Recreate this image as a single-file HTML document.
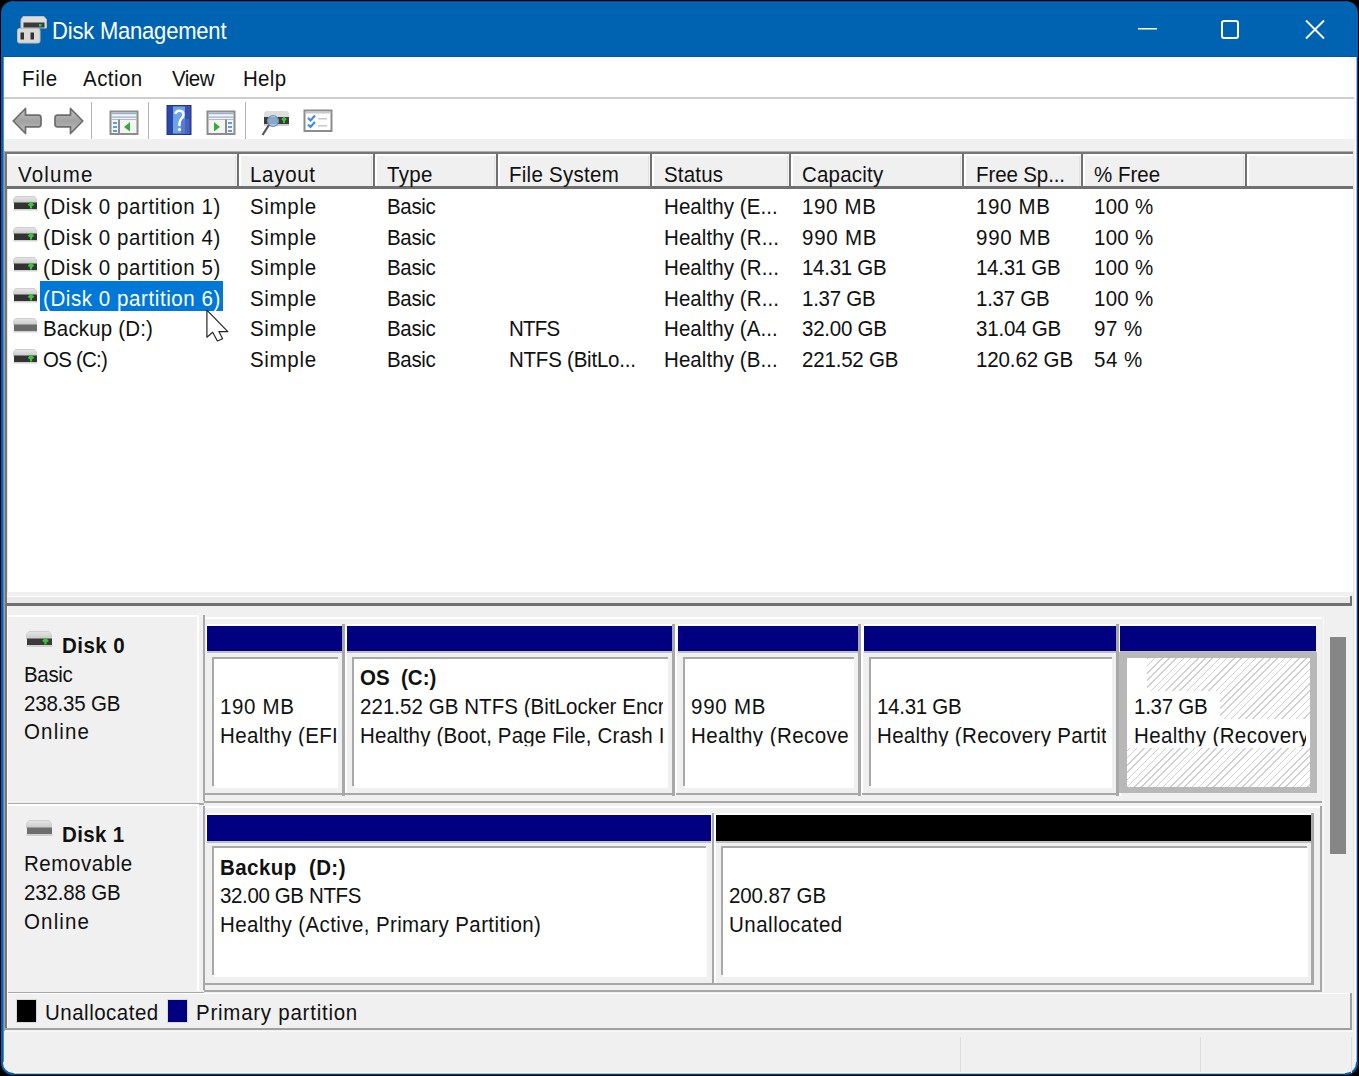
<!DOCTYPE html>
<html><head><meta charset="utf-8">
<style>
*{margin:0;padding:0;box-sizing:border-box}
html,body{width:1359px;height:1076px;overflow:hidden;background:#000}
body{position:relative;font-family:"Liberation Sans",sans-serif;font-size:20.5px;color:#000}
.a{position:absolute}
.t{position:absolute;white-space:pre;line-height:20px;height:20px;color:#111;transform:scaleY(1.08);transform-origin:0 17px}
</style></head><body>
<div class="a" style="left:1px;top:1px;width:1357px;height:1074px;border-radius:12px;background:#0063b1"></div>
<div class="a" style="left:3px;top:57px;width:1353px;height:1016px;background:#f0f0f0;border-radius:0 0 10px 10px"></div>

<div class="t" style="left:52px;top:21px;letter-spacing:-0.2px;color:#fff;font-size:22px;line-height:21px">Disk Management</div>
<div class="a" style="left:4px;top:57px;width:1351px;height:40px;background:#fff;"></div>
<div class="a" style="left:4px;top:97px;width:1351px;height:2px;background:#cdcdcd;"></div>
<div class="t" style="left:22px;top:69px;letter-spacing:0.67px;">File</div>
<div class="t" style="left:83px;top:69px;letter-spacing:0.46px;">Action</div>
<div class="t" style="left:172px;top:69px;letter-spacing:-0.53px;">View</div>
<div class="t" style="left:243px;top:69px;letter-spacing:0.3px;">Help</div>
<div class="a" style="left:4px;top:99px;width:1351px;height:40px;background:#fff;"></div>
<svg width="0" height="0" style="position:absolute">
<defs>
 <linearGradient id="gtop" x1="0" y1="0" x2="0" y2="1"><stop offset="0" stop-color="#e6e6e6"/><stop offset="1" stop-color="#c9c9c9"/></linearGradient>
 <g id="ico">
  <path d="M2.5 1.5 H21.5 L23.5 4 V8 H0.5 V4 Z" fill="url(#gtop)" stroke="#cfcfcf" stroke-width="1"/>
  <rect x="1" y="7.5" width="23" height="6.5" fill="#333"/>
  <rect x="0.5" y="14" width="24" height="1.5" fill="#d0d0d0"/>
  <path d="M18 8 V13.5 M15.5 10.5 L18 8 L20.5 10.5" stroke="#3cc43c" stroke-width="2.2" fill="none"/>
 </g>
 <g id="icog">
  <path d="M2.5 1.5 H21.5 L23.5 4 V8 H0.5 V4 Z" fill="url(#gtop)" stroke="#cfcfcf" stroke-width="1"/>
  <rect x="1" y="7.5" width="23" height="6.5" fill="#6a6a6a"/>
  <rect x="0.5" y="14" width="24" height="1.5" fill="#d0d0d0"/>
 </g>
 <g id="dico">
  <path d="M3 1.5 H23 L25.5 4.5 V9 H0.5 V4.5 Z" fill="url(#gtop)" stroke="#cfcfcf" stroke-width="1"/>
  <rect x="1" y="8.5" width="25" height="6.5" fill="#3a3a3a"/>
  <rect x="0.5" y="15" width="26" height="2" fill="#d0d0d0"/>
  <path d="M19.5 9 V14.5 M17 11.5 L19.5 9 L22 11.5" stroke="#3cc43c" stroke-width="2.2" fill="none"/>
 </g>
 <g id="dicog">
  <path d="M3 1.5 H23 L25.5 4.5 V9 H0.5 V4.5 Z" fill="url(#gtop)" stroke="#cfcfcf" stroke-width="1"/>
  <rect x="1" y="8.5" width="25" height="6.5" fill="#6e6e6e"/>
  <rect x="0.5" y="15" width="26" height="2" fill="#d0d0d0"/>
 </g>
 <linearGradient id="garr" x1="0" y1="0" x2="0" y2="1"><stop offset="0" stop-color="#c4c4c4"/><stop offset="0.5" stop-color="#a2a2a2"/><stop offset="1" stop-color="#bdbdbd"/></linearGradient>
 <linearGradient id="gbook" x1="0" y1="0" x2="1" y2="0"><stop offset="0" stop-color="#1d3f9e"/><stop offset="0.5" stop-color="#4f86d6"/><stop offset="1" stop-color="#2a4fae"/></linearGradient>
</defs>
</svg>

<!-- TITLE BAR ICON -->
<svg class="a" style="left:17px;top:15px" width="31" height="29" viewBox="0 0 31 29">
  <path d="M6 1.5 H27 L29.5 4.5 V13 H4 V4.5 Z" fill="#dcdcdc" stroke="#bdbdbd" stroke-width="1"/>
  <rect x="6.5" y="7.5" width="21" height="5" fill="#3a3a3a"/>
  <rect x="22" y="9" width="2.5" height="2.5" fill="#3cc43c"/>
  <rect x="0.5" y="13.5" width="22.5" height="14.5" rx="2" fill="#d9d9d9" stroke="#bdbdbd" stroke-width="1"/>
  <rect x="3.5" y="17.5" width="3.5" height="7" fill="#333"/>
  <rect x="13.5" y="17.5" width="3.5" height="7" fill="#333"/>
</svg>
<!-- TITLE BUTTONS -->
<div class="a" style="left:1138px;top:28px;width:19px;height:2px;background:linear-gradient(#fff 0 1px,rgba(255,255,255,.5) 1px 2px)"></div>
<div class="a" style="left:1221px;top:20px;width:18px;height:19px;border:2px solid #fff;border-radius:3px"></div>
<svg class="a" style="left:1304px;top:19px" width="22" height="22"><path d="M2 1.5 L20 19.5 M20 1.5 L2 19.5" stroke="#fff" stroke-width="1.8"/></svg>
<!-- TOOLBAR ICONS -->
<svg class="a" style="left:12px;top:107px" width="31" height="29" viewBox="0 0 31 29">
  <path d="M1.2 14 L13.5 1.5 V8.2 H26.5 Q29 8.2 29 10.7 V17.3 Q29 19.8 26.5 19.8 H13.5 V26.5 Z" fill="url(#garr)" stroke="#6c6c6c" stroke-width="1.7" stroke-linejoin="round"/>
</svg>
<svg class="a" style="left:53px;top:107px" width="31" height="29" viewBox="0 0 31 29">
  <path d="M29.8 14 L17.5 1.5 V8.2 H4.5 Q2 8.2 2 10.7 V17.3 Q2 19.8 4.5 19.8 H17.5 V26.5 Z" fill="url(#garr)" stroke="#6c6c6c" stroke-width="1.7" stroke-linejoin="round"/>
</svg>
<div class="a" style="left:91px;top:102px;width:1px;height:37px;background:#b4b4b4"></div>
<svg class="a" style="left:109px;top:110px" width="31" height="26" viewBox="0 0 31 26">
  <rect x="1.5" y="1.5" width="27" height="22.5" fill="#f4f4f4" stroke="#8c8c8c" stroke-width="2"/>
  <rect x="2.5" y="3" width="25" height="1.2" fill="#8fb0d8"/>
  <rect x="2.5" y="6.5" width="25" height="1.2" fill="#8fb0d8"/>
  <rect x="2.5" y="9" width="25" height="1" fill="#b8b8b8"/>
  <line x1="10" y1="9.5" x2="10" y2="24" stroke="#8c8c8c" stroke-width="2"/>
  <rect x="4" y="12" width="4" height="2" fill="#5a9ee0"/><rect x="4" y="16" width="4" height="2" fill="#5a9ee0"/><rect x="4" y="20" width="4" height="2" fill="#5a9ee0"/>
  <path d="M15 17 L21 12 V21.5 Z" fill="#3aa83a"/>
</svg>
<div class="a" style="left:148px;top:102px;width:1px;height:37px;background:#b4b4b4"></div>
<svg class="a" style="left:166px;top:105px" width="26" height="30" viewBox="0 0 26 30">
  <rect x="1" y="0.5" width="24" height="29" fill="#3a4fae"/>
  <rect x="1" y="0.5" width="6" height="29" fill="#2a48a8"/>
  <rect x="7" y="1.5" width="12" height="27" fill="#6ea4e4"/>
  <rect x="15" y="14" width="8" height="15" fill="#4f6cc4" opacity="0.7"/>
  <rect x="1" y="0.5" width="24" height="29" fill="none" stroke="#24328a" stroke-width="1"/>
  <path d="M9.5 9 C9.5 4.5 17.5 4.5 17.5 9.5 C17.5 13 13.5 14 13.5 18 V21" stroke="#fff" stroke-width="2.4" fill="none"/>
  <circle cx="13.5" cy="24.5" r="1.6" fill="#fff"/>
</svg>
<svg class="a" style="left:206px;top:110px" width="31" height="26" viewBox="0 0 31 26">
  <rect x="1.5" y="1.5" width="27" height="22.5" fill="#f4f4f4" stroke="#8c8c8c" stroke-width="2"/>
  <rect x="2.5" y="3" width="25" height="1.2" fill="#8fb0d8"/>
  <rect x="2.5" y="6.5" width="25" height="1.2" fill="#8fb0d8"/>
  <rect x="2.5" y="9" width="25" height="1" fill="#b8b8b8"/>
  <line x1="20" y1="9.5" x2="20" y2="24" stroke="#8c8c8c" stroke-width="2"/>
  <rect x="22" y="12" width="4" height="2" fill="#5a9ee0"/><rect x="22" y="16" width="4" height="2" fill="#5a9ee0"/><rect x="22" y="20" width="4" height="2" fill="#5a9ee0"/>
  <path d="M14 17 L8 12 V21.5 Z" fill="#3aa83a"/>
</svg>
<div class="a" style="left:245px;top:102px;width:1px;height:37px;background:#b4b4b4"></div>
<svg class="a" style="left:261px;top:110px" width="30" height="27" viewBox="0 0 30 27">
  <path d="M5 1 H26 L28 3 V7 H3 V3 Z" fill="#dedede"/>
  <rect x="3" y="7" width="25" height="7" fill="#3a3a3a"/>
  <rect x="3" y="14" width="25" height="2" fill="#d0d0d0"/>
  <path d="M23 8 V13 M21 10 L23 8 L25 10" stroke="#3cc43c" stroke-width="2" fill="none"/>
  <circle cx="12" cy="11" r="5.5" fill="#9ec3ea" fill-opacity="0.8" stroke="#6f8fb5" stroke-width="1.2"/>
  <line x1="8" y1="15" x2="1.5" y2="25" stroke="#555" stroke-width="2.2"/>
</svg>
<svg class="a" style="left:303px;top:109px" width="31" height="24" viewBox="0 0 31 24">
  <rect x="1.5" y="1.5" width="27" height="20.5" fill="#fff" stroke="#8c8c8c" stroke-width="2"/>
  <rect x="2.5" y="2.5" width="25" height="2" fill="#c8c8c8"/>
  <path d="M5 9 L7.5 11.5 L12 6.5" stroke="#3d8be0" stroke-width="2.2" fill="none"/>
  <path d="M5 15.5 L7.5 18 L12 13" stroke="#3d8be0" stroke-width="2.2" fill="none"/>
  <rect x="15" y="9" width="9" height="1.5" fill="#c8c8c8"/><rect x="15" y="16" width="9" height="1.5" fill="#c8c8c8"/>
</svg>

<div class="a" style="left:5px;top:151px;width:1348px;height:441px;background:#fff;"></div>
<div class="a" style="left:5px;top:151px;width:1348px;height:1px;background:#b0b0b0;"></div>
<div class="a" style="left:5px;top:152px;width:1348px;height:2px;background:#767676;"></div>
<div class="a" style="left:4px;top:151px;width:1px;height:880px;background:#a09c9a;"></div>
<div class="a" style="left:5px;top:152px;width:2px;height:878px;background:#767676;"></div>
<div class="a" style="left:7px;top:154px;width:1px;height:438px;background:#e8e8e8;"></div>
<div class="a" style="left:7px;top:154px;width:1346px;height:32px;background:#f0f0f0;"></div>
<div class="a" style="left:7px;top:154px;width:1346px;height:2px;background:#fff;"></div>
<div class="a" style="left:7px;top:186px;width:1347px;height:3px;background:#707070;"></div>
<div class="a" style="left:235px;top:156px;width:1px;height:30px;background:#e3e3e3;"></div>
<div class="a" style="left:237px;top:154px;width:2px;height:33px;background:#707070;"></div>
<div class="a" style="left:239px;top:156px;width:2px;height:30px;background:#fff;"></div>
<div class="a" style="left:371px;top:156px;width:1px;height:30px;background:#e3e3e3;"></div>
<div class="a" style="left:373px;top:154px;width:2px;height:33px;background:#707070;"></div>
<div class="a" style="left:375px;top:156px;width:2px;height:30px;background:#fff;"></div>
<div class="a" style="left:494px;top:156px;width:1px;height:30px;background:#e3e3e3;"></div>
<div class="a" style="left:496px;top:154px;width:2px;height:33px;background:#707070;"></div>
<div class="a" style="left:498px;top:156px;width:2px;height:30px;background:#fff;"></div>
<div class="a" style="left:648px;top:156px;width:1px;height:30px;background:#e3e3e3;"></div>
<div class="a" style="left:650px;top:154px;width:2px;height:33px;background:#707070;"></div>
<div class="a" style="left:652px;top:156px;width:2px;height:30px;background:#fff;"></div>
<div class="a" style="left:787px;top:156px;width:1px;height:30px;background:#e3e3e3;"></div>
<div class="a" style="left:789px;top:154px;width:2px;height:33px;background:#707070;"></div>
<div class="a" style="left:791px;top:156px;width:2px;height:30px;background:#fff;"></div>
<div class="a" style="left:960px;top:156px;width:1px;height:30px;background:#e3e3e3;"></div>
<div class="a" style="left:962px;top:154px;width:2px;height:33px;background:#707070;"></div>
<div class="a" style="left:964px;top:156px;width:2px;height:30px;background:#fff;"></div>
<div class="a" style="left:1079px;top:156px;width:1px;height:30px;background:#e3e3e3;"></div>
<div class="a" style="left:1081px;top:154px;width:2px;height:33px;background:#707070;"></div>
<div class="a" style="left:1083px;top:156px;width:2px;height:30px;background:#fff;"></div>
<div class="a" style="left:1243px;top:156px;width:1px;height:30px;background:#e3e3e3;"></div>
<div class="a" style="left:1245px;top:154px;width:2px;height:33px;background:#707070;"></div>
<div class="a" style="left:1247px;top:156px;width:2px;height:30px;background:#fff;"></div>
<div class="t" style="left:18px;top:165px;letter-spacing:1.2px;">Volume</div>
<div class="t" style="left:250px;top:165px;letter-spacing:0.7px;">Layout</div>
<div class="t" style="left:387px;top:165px;letter-spacing:0.33px;">Type</div>
<div class="t" style="left:509px;top:165px;letter-spacing:0.27px;">File System</div>
<div class="t" style="left:664px;top:165px;letter-spacing:0.2px;">Status</div>
<div class="t" style="left:802px;top:165px;letter-spacing:0.2px;">Capacity</div>
<div class="t" style="left:976px;top:165px;letter-spacing:-0.11px;">Free Sp...</div>
<div class="t" style="left:1094px;top:165px;letter-spacing:0.0px;">% Free</div>
<svg class="a" style="left:13px;top:195px" width="25" height="17"><use href="#ico"/></svg>
<div class="t" style="left:43px;top:197px;letter-spacing:0.58px;">(Disk 0 partition 1)</div>
<div class="t" style="left:250px;top:197px;letter-spacing:0.68px;">Simple</div>
<div class="t" style="left:387px;top:197px;letter-spacing:-0.32px;">Basic</div>
<div class="t" style="left:664px;top:197px;letter-spacing:0.08px;">Healthy (E...</div>
<div class="t" style="left:802px;top:197px;letter-spacing:0.66px;">190 MB</div>
<div class="t" style="left:976px;top:197px;letter-spacing:0.66px;">190 MB</div>
<div class="t" style="left:1094px;top:197px;letter-spacing:0.25px;">100 %</div>
<svg class="a" style="left:13px;top:225.6px" width="25" height="17"><use href="#ico"/></svg>
<div class="t" style="left:43px;top:227.6px;letter-spacing:0.58px;">(Disk 0 partition 4)</div>
<div class="t" style="left:250px;top:227.6px;letter-spacing:0.68px;">Simple</div>
<div class="t" style="left:387px;top:227.6px;letter-spacing:-0.32px;">Basic</div>
<div class="t" style="left:664px;top:227.6px;letter-spacing:0.08px;">Healthy (R...</div>
<div class="t" style="left:802px;top:227.6px;letter-spacing:0.76px;">990 MB</div>
<div class="t" style="left:976px;top:227.6px;letter-spacing:0.76px;">990 MB</div>
<div class="t" style="left:1094px;top:227.6px;letter-spacing:0.25px;">100 %</div>
<svg class="a" style="left:13px;top:256.2px" width="25" height="17"><use href="#ico"/></svg>
<div class="t" style="left:43px;top:258.2px;letter-spacing:0.58px;">(Disk 0 partition 5)</div>
<div class="t" style="left:250px;top:258.2px;letter-spacing:0.68px;">Simple</div>
<div class="t" style="left:387px;top:258.2px;letter-spacing:-0.32px;">Basic</div>
<div class="t" style="left:664px;top:258.2px;letter-spacing:0.08px;">Healthy (R...</div>
<div class="t" style="left:802px;top:258.2px;letter-spacing:-0.29px;">14.31 GB</div>
<div class="t" style="left:976px;top:258.2px;letter-spacing:-0.29px;">14.31 GB</div>
<div class="t" style="left:1094px;top:258.2px;letter-spacing:0.25px;">100 %</div>
<svg class="a" style="left:13px;top:286.8px" width="25" height="17"><use href="#ico"/></svg>
<div class="a" style="left:40px;top:281px;width:183px;height:30px;background:#0078d7;"></div>
<div class="t" style="left:43px;top:288.8px;letter-spacing:0.58px;color:#fff;">(Disk 0 partition 6)</div>
<div class="t" style="left:250px;top:288.8px;letter-spacing:0.68px;">Simple</div>
<div class="t" style="left:387px;top:288.8px;letter-spacing:-0.32px;">Basic</div>
<div class="t" style="left:664px;top:288.8px;letter-spacing:0.08px;">Healthy (R...</div>
<div class="t" style="left:802px;top:288.8px;letter-spacing:-0.25px;">1.37 GB</div>
<div class="t" style="left:976px;top:288.8px;letter-spacing:-0.25px;">1.37 GB</div>
<div class="t" style="left:1094px;top:288.8px;letter-spacing:0.25px;">100 %</div>
<svg class="a" style="left:13px;top:317.4px" width="25" height="17"><use href="#icog"/></svg>
<div class="t" style="left:43px;top:319.4px;letter-spacing:0.17px;">Backup (D:)</div>
<div class="t" style="left:250px;top:319.4px;letter-spacing:0.68px;">Simple</div>
<div class="t" style="left:387px;top:319.4px;letter-spacing:-0.32px;">Basic</div>
<div class="t" style="left:509px;top:319.4px;letter-spacing:-0.8px;">NTFS</div>
<div class="t" style="left:664px;top:319.4px;letter-spacing:0.08px;">Healthy (A...</div>
<div class="t" style="left:802px;top:319.4px;letter-spacing:-0.25px;">32.00 GB</div>
<div class="t" style="left:976px;top:319.4px;letter-spacing:-0.2px;">31.04 GB</div>
<div class="t" style="left:1094px;top:319.4px;letter-spacing:0.5px;">97 %</div>
<svg class="a" style="left:13px;top:348px" width="25" height="17"><use href="#ico"/></svg>
<div class="t" style="left:43px;top:350px;letter-spacing:-0.78px;">OS (C:)</div>
<div class="t" style="left:250px;top:350px;letter-spacing:0.68px;">Simple</div>
<div class="t" style="left:387px;top:350px;letter-spacing:-0.32px;">Basic</div>
<div class="t" style="left:509px;top:350px;letter-spacing:-0.23px;">NTFS (BitLo...</div>
<div class="t" style="left:664px;top:350px;letter-spacing:0.08px;">Healthy (B...</div>
<div class="t" style="left:802px;top:350px;letter-spacing:-0.19px;">221.52 GB</div>
<div class="t" style="left:976px;top:350px;letter-spacing:-0.12px;">120.62 GB</div>
<div class="t" style="left:1094px;top:350px;letter-spacing:0.5px;">54 %</div>
<div class="a" style="left:7px;top:596px;width:1343px;height:1px;background:#fff;"></div>
<div class="a" style="left:7px;top:597px;width:1343px;height:6px;background:#e9e9e9;"></div>
<div class="a" style="left:5px;top:603px;width:1347px;height:3px;background:#707070;"></div>
<div class="a" style="left:1350px;top:596px;width:2px;height:10px;background:#707070;"></div>
<div class="a" style="left:7px;top:615px;width:192px;height:2px;background:#fff;"></div>
<div class="a" style="left:197px;top:615px;width:2px;height:187px;background:#fff;"></div>
<div class="a" style="left:7px;top:803px;width:197px;height:2px;background:#a8a8a8;"></div>
<div class="a" style="left:203px;top:615px;width:2px;height:186px;background:#a8a8a8;"></div>
<div class="a" style="left:205px;top:617px;width:1117px;height:2px;background:#fff;"></div>
<div class="a" style="left:204px;top:801px;width:1118px;height:2px;background:#a8a8a8;"></div>
<div class="a" style="left:7px;top:804px;width:192px;height:2px;background:#fff;"></div>
<div class="a" style="left:197px;top:804px;width:2px;height:187px;background:#fff;"></div>
<div class="a" style="left:7px;top:992px;width:197px;height:2px;background:#a8a8a8;"></div>
<div class="a" style="left:203px;top:806px;width:2px;height:184px;background:#a8a8a8;"></div>
<div class="a" style="left:205px;top:806px;width:1117px;height:2px;background:#fff;"></div>
<div class="a" style="left:204px;top:990px;width:1118px;height:2px;background:#a8a8a8;"></div>
<div class="a" style="left:1320px;top:806px;width:2px;height:186px;background:#a8a8a8;"></div>
<div class="a" style="left:207px;top:624px;width:135px;height:2px;background:#fff;"></div>
<div class="a" style="left:207px;top:626px;width:135px;height:25px;background:#000080;"></div>
<div class="a" style="left:206px;top:626px;width:1px;height:25px;background:#fff;"></div>
<div class="a" style="left:207px;top:651px;width:135px;height:2px;background:#c0c0c0;"></div>
<div class="a" style="left:342px;top:624px;width:3px;height:172px;background:#a8a8a8;"></div>
<div class="a" style="left:345px;top:626px;width:2px;height:170px;background:#fff;"></div>
<div class="a" style="left:205px;top:793px;width:140px;height:2px;background:#a8a8a8;"></div>
<div class="a" style="left:212px;top:657px;width:126px;height:2px;background:#a8a8a8;"></div>
<div class="a" style="left:212px;top:657px;width:2px;height:129px;background:#a8a8a8;"></div>
<div class="a" style="left:214px;top:659px;width:124px;height:129px;background:#fff;"></div>
<div class="a" style="left:347px;top:624px;width:325px;height:2px;background:#fff;"></div>
<div class="a" style="left:347px;top:626px;width:325px;height:25px;background:#000080;"></div>
<div class="a" style="left:346px;top:626px;width:1px;height:25px;background:#fff;"></div>
<div class="a" style="left:347px;top:651px;width:325px;height:2px;background:#c0c0c0;"></div>
<div class="a" style="left:672px;top:624px;width:3px;height:172px;background:#a8a8a8;"></div>
<div class="a" style="left:675px;top:626px;width:2px;height:170px;background:#fff;"></div>
<div class="a" style="left:345px;top:793px;width:330px;height:2px;background:#a8a8a8;"></div>
<div class="a" style="left:352px;top:657px;width:316px;height:2px;background:#a8a8a8;"></div>
<div class="a" style="left:352px;top:657px;width:2px;height:129px;background:#a8a8a8;"></div>
<div class="a" style="left:354px;top:659px;width:314px;height:129px;background:#fff;"></div>
<div class="a" style="left:678px;top:624px;width:180px;height:2px;background:#fff;"></div>
<div class="a" style="left:678px;top:626px;width:180px;height:25px;background:#000080;"></div>
<div class="a" style="left:677px;top:626px;width:1px;height:25px;background:#fff;"></div>
<div class="a" style="left:678px;top:651px;width:180px;height:2px;background:#c0c0c0;"></div>
<div class="a" style="left:858px;top:624px;width:3px;height:172px;background:#a8a8a8;"></div>
<div class="a" style="left:861px;top:626px;width:2px;height:170px;background:#fff;"></div>
<div class="a" style="left:676px;top:793px;width:185px;height:2px;background:#a8a8a8;"></div>
<div class="a" style="left:683px;top:657px;width:171px;height:2px;background:#a8a8a8;"></div>
<div class="a" style="left:683px;top:657px;width:2px;height:129px;background:#a8a8a8;"></div>
<div class="a" style="left:685px;top:659px;width:169px;height:129px;background:#fff;"></div>
<div class="a" style="left:864px;top:624px;width:252px;height:2px;background:#fff;"></div>
<div class="a" style="left:864px;top:626px;width:252px;height:25px;background:#000080;"></div>
<div class="a" style="left:863px;top:626px;width:1px;height:25px;background:#fff;"></div>
<div class="a" style="left:864px;top:651px;width:252px;height:2px;background:#c0c0c0;"></div>
<div class="a" style="left:1116px;top:624px;width:3px;height:172px;background:#a8a8a8;"></div>
<div class="a" style="left:1119px;top:626px;width:2px;height:170px;background:#fff;"></div>
<div class="a" style="left:862px;top:793px;width:257px;height:2px;background:#a8a8a8;"></div>
<div class="a" style="left:869px;top:657px;width:243px;height:2px;background:#a8a8a8;"></div>
<div class="a" style="left:869px;top:657px;width:2px;height:129px;background:#a8a8a8;"></div>
<div class="a" style="left:871px;top:659px;width:241px;height:129px;background:#fff;"></div>
<div class="a" style="left:1120px;top:624px;width:196px;height:2px;background:#fff;"></div>
<div class="a" style="left:1120px;top:626px;width:196px;height:25px;background:#000080;"></div>
<div class="a" style="left:1119px;top:626px;width:1px;height:25px;background:#fff;"></div>
<div class="a" style="left:1120px;top:651px;width:196px;height:2px;background:#c0c0c0;"></div>
<div class="a" style="left:1119px;top:652px;width:198px;height:141px;background:#b8b8b8;"></div>
<div class="a" style="left:1127px;top:658px;width:183px;height:129px;background:repeating-linear-gradient(135deg,#fff 0px,#fff 4px,#cfcfcf 4px,#cfcfcf 5.1px);"></div>
<div class="a" style="left:1127px;top:658px;width:20px;height:33px;background:#fff;"></div>
<div class="a" style="left:1127px;top:691px;width:93px;height:28px;background:#fff;"></div>
<div class="a" style="left:1127px;top:719px;width:183px;height:29px;background:#fff;"></div>
<div class="a" style="left:207px;top:813px;width:504px;height:2px;background:#fff;"></div>
<div class="a" style="left:207px;top:815px;width:504px;height:26px;background:#000080;"></div>
<div class="a" style="left:206px;top:815px;width:1px;height:26px;background:#fff;"></div>
<div class="a" style="left:207px;top:841px;width:504px;height:2px;background:#c0c0c0;"></div>
<div class="a" style="left:712px;top:813px;width:2px;height:171px;background:#a8a8a8;"></div>
<div class="a" style="left:714px;top:815px;width:2px;height:168px;background:#fff;"></div>
<div class="a" style="left:205px;top:983px;width:509px;height:2px;background:#a8a8a8;"></div>
<div class="a" style="left:212px;top:846px;width:494px;height:2px;background:#a8a8a8;"></div>
<div class="a" style="left:212px;top:846px;width:2px;height:129px;background:#a8a8a8;"></div>
<div class="a" style="left:214px;top:848px;width:493px;height:129px;background:#fff;"></div>
<div class="a" style="left:716px;top:813px;width:595px;height:2px;background:#fff;"></div>
<div class="a" style="left:716px;top:815px;width:595px;height:26px;background:#000;"></div>
<div class="a" style="left:715px;top:815px;width:1px;height:26px;background:#fff;"></div>
<div class="a" style="left:716px;top:841px;width:595px;height:2px;background:#c0c0c0;"></div>
<div class="a" style="left:1311px;top:813px;width:3px;height:172px;background:#a8a8a8;"></div>
<div class="a" style="left:714px;top:983px;width:600px;height:2px;background:#a8a8a8;"></div>
<div class="a" style="left:721px;top:846px;width:586px;height:2px;background:#a8a8a8;"></div>
<div class="a" style="left:721px;top:846px;width:2px;height:129px;background:#a8a8a8;"></div>
<div class="a" style="left:723px;top:848px;width:585px;height:129px;background:#fff;"></div>
<div class="a" style="left:1323px;top:617px;width:1px;height:375px;background:#f8f8f8;"></div>
<div class="a" style="left:1330px;top:637px;width:16px;height:217px;background:#868686;"></div>
<svg class="a" style="left:26px;top:630px" width="27" height="18"><use href="#dico"/></svg>
<svg class="a" style="left:26px;top:819px" width="27" height="18"><use href="#dicog"/></svg>
<div class="t" style="left:62px;top:636px;letter-spacing:0.46px;font-weight:bold;">Disk 0</div>
<div class="t" style="left:24px;top:665px;letter-spacing:-0.32px;">Basic</div>
<div class="t" style="left:24px;top:694px;letter-spacing:-0.21px;">238.35 GB</div>
<div class="t" style="left:24px;top:722px;letter-spacing:1.14px;">Online</div>
<div class="t" style="left:62px;top:825px;letter-spacing:0.34px;font-weight:bold;">Disk 1</div>
<div class="t" style="left:24px;top:854px;letter-spacing:0.57px;">Removable</div>
<div class="t" style="left:24px;top:883px;letter-spacing:-0.18px;">232.88 GB</div>
<div class="t" style="left:24px;top:912px;letter-spacing:1.14px;">Online</div>
<div class="t" style="left:360px;top:668px;letter-spacing:0.0px;font-weight:bold;">OS  (C:)</div>
<div class="t" style="left:220px;top:697px;letter-spacing:0.66px;">190 MB</div>
<div class="t" style="left:220px;top:726px;letter-spacing:0.35px;width:118px;overflow:hidden">Healthy (EFI</div>
<div class="t" style="left:360px;top:697px;letter-spacing:0.05px;width:303px;overflow:hidden">221.52 GB NTFS (BitLocker Encr</div>
<div class="t" style="left:360px;top:726px;letter-spacing:0.15px;width:303px;overflow:hidden">Healthy (Boot, Page File, Crash I</div>
<div class="t" style="left:691px;top:697px;letter-spacing:0.76px;">990 MB</div>
<div class="t" style="left:691px;top:726px;letter-spacing:0.43px;width:160px;overflow:hidden">Healthy (Recove</div>
<div class="t" style="left:877px;top:697px;letter-spacing:-0.29px;">14.31 GB</div>
<div class="t" style="left:877px;top:726px;letter-spacing:0.33px;width:229px;overflow:hidden">Healthy (Recovery Partit</div>
<div class="t" style="left:1134px;top:697px;letter-spacing:-0.25px;">1.37 GB</div>
<div class="t" style="left:1134px;top:726px;letter-spacing:0.4px;width:172px;overflow:hidden">Healthy (Recovery</div>
<div class="t" style="left:220px;top:858px;letter-spacing:0.43px;font-weight:bold;">Backup  (D:)</div>
<div class="t" style="left:220px;top:886px;letter-spacing:-0.37px;">32.00 GB NTFS</div>
<div class="t" style="left:220px;top:915px;letter-spacing:0.39px;">Healthy (Active, Primary Partition)</div>
<div class="t" style="left:729px;top:886px;letter-spacing:-0.12px;">200.87 GB</div>
<div class="t" style="left:729px;top:915px;letter-spacing:0.5px;">Unallocated</div>
<div class="a" style="left:7px;top:993px;width:1344px;height:1px;background:#fff;"></div>
<div class="a" style="left:5px;top:1028px;width:1347px;height:2px;background:#a0a0a0;"></div>
<div class="a" style="left:1350px;top:993px;width:2px;height:37px;background:#a0a0a0;"></div>
<div class="a" style="left:16px;top:999px;width:21px;height:24px;background:#d8d8d8;"></div>
<div class="a" style="left:17px;top:1000px;width:19px;height:22px;background:#000;"></div>
<div class="a" style="left:167px;top:999px;width:21px;height:24px;background:#d8d8d8;"></div>
<div class="a" style="left:168px;top:1000px;width:19px;height:22px;background:#000080;"></div>
<div class="t" style="left:45px;top:1003px;letter-spacing:0.5px;">Unallocated</div>
<div class="t" style="left:196px;top:1003px;letter-spacing:0.75px;">Primary partition</div>
<div class="a" style="left:4px;top:1031px;width:1351px;height:1px;background:#f8f8f8;"></div>
<div class="a" style="left:960px;top:1037px;width:1px;height:36px;background:#dcdcdc;"></div>
<div class="a" style="left:1200px;top:1037px;width:1px;height:36px;background:#dcdcdc;"></div>
<div class="a" style="left:1351px;top:1037px;width:1px;height:36px;background:#dcdcdc;"></div>
<div class="a" style="left:7px;top:607px;width:1px;height:421px;background:#fafafa;"></div>
<div class="a" style="left:3px;top:56px;width:1353px;height:1px;background:#0054a6;"></div>
<div class="a" style="left:14px;top:1px;width:1331px;height:1px;background:#00488e;"></div>
<div class="a" style="left:14px;top:2px;width:1331px;height:1px;background:#0068bc;"></div>
<div class="a" style="left:3px;top:57px;width:1px;height:1005px;background:#4d8cc4;"></div>
<div class="a" style="left:1353px;top:151px;width:1px;height:880px;background:#e6e6e6;"></div>
<div class="a" style="left:1354px;top:57px;width:1px;height:1005px;background:#f4f4f4;"></div>
<div class="a" style="left:1355px;top:57px;width:1px;height:1005px;background:#fff;"></div>
<div class="a" style="left:1356px;top:57px;width:1px;height:1005px;background:#90c4ec;"></div>
<div class="a" style="left:1357px;top:57px;width:1px;height:1005px;background:#103c78;"></div>
<div class="a" style="left:14px;top:1072px;width:1331px;height:1px;background:#fffff4;"></div>
<div class="a" style="left:14px;top:1073px;width:1331px;height:1px;background:#90c4ec;"></div>
<div class="a" style="left:14px;top:1074px;width:1331px;height:1px;background:#103c78;"></div>
<!-- CURSOR -->
<svg class="a" style="left:205px;top:309px" width="26" height="35" viewBox="0 0 26 35">
  <path d="M1.9 1.2 V28.2 L7.7 23.3 L12.4 32 L17.6 29.8 L13.9 22.6 H22.8 Z" fill="#fff" stroke="#262626" stroke-width="1.2" stroke-linejoin="round"/>
</svg>

</body></html>
